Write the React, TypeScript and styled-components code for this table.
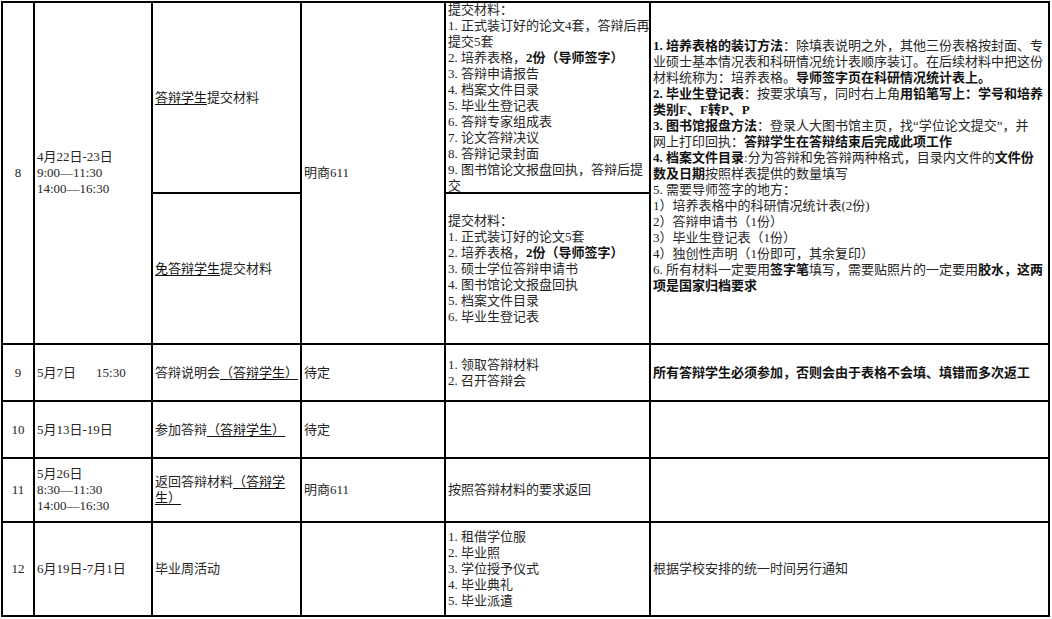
import React from 'react';
import styled, { createGlobalStyle } from 'styled-components';

const GlobalStyle = createGlobalStyle`
  html, body { margin: 0; padding: 0; background: #ffffff; }
  body {
    font-family: "Liberation Serif", "Noto Sans CJK SC", serif;
    font-size: 13px;
    color: #262626;
  }
`;

const Page = styled.div`
  width: 1052px;
  height: 619px;
  box-sizing: border-box;
  padding: 1px 0 0 1px;
  overflow: hidden;
  background: #fff;
`;

const Sheet = styled.table`
  border-collapse: collapse;
  table-layout: fixed;
  width: 1049px;
`;

const Col = styled.col<{ $w: number }>`
  width: ${(p) => p.$w}px;
`;

const Cell = styled.td<{ $center?: boolean; $padBottom?: number }>`
  border: 2px solid #000;
  padding: 0 0 ${(p) => p.$padBottom ?? 0}px ${(p) => (p.$center ? 0 : 2)}px;
  text-align: ${(p) => (p.$center ? 'center' : 'left')};
  vertical-align: middle;
  line-height: 16px;
  white-space: nowrap;
  overflow: hidden;
`;

const Frame = styled.div<{ $h: number }>`
  height: ${(p) => p.$h}px;
  display: flex;
  flex-direction: column;
  justify-content: center;
  overflow: hidden;
`;

const Line = styled.div`
  white-space: nowrap;
`;

const U = styled.span`
  text-decoration: underline;
  text-decoration-thickness: 1px;
  text-underline-offset: 2px;
  color: #111;
`;

const B = styled.span`
  font-weight: 700;
  color: #111;
`;

const Gap = styled.span<{ $w: number }>`
  display: inline-block;
  width: ${(p) => p.$w}px;
`;

const widths = [32, 118, 149, 144, 205, 399];

export default function App() {
  return (
    <>
      <GlobalStyle />
      <Page>
        <Sheet>
          <colgroup>
            {widths.map((w, i) => (
              <Col key={i} $w={w} />
            ))}
          </colgroup>
          <tbody>
            <tr>
              <Cell $center rowSpan={2}>8</Cell>
              <Cell rowSpan={2}>
                <Line>4月22日-23日</Line>
                <Line>9:00—11:30</Line>
                <Line>14:00—16:30</Line>
              </Cell>
              <Cell>
                <Frame $h={189}>
                  <Line>
                    <U>答辩学生</U>提交材料
                  </Line>
                </Frame>
              </Cell>
              <Cell rowSpan={2}>明商611</Cell>
              <Cell>
                <Frame $h={189}>
                  <Line>提交材料：</Line>
                  <Line>1. 正式装订好的论文4套，答辩后再</Line>
                  <Line>提交5套</Line>
                  <Line>
                    2. 培养表格，<B>2份（导师签字）</B>
                  </Line>
                  <Line>3. 答辩申请报告</Line>
                  <Line>4. 档案文件目录</Line>
                  <Line>5. 毕业生登记表</Line>
                  <Line>6. 答辩专家组成表</Line>
                  <Line>7. 论文答辩决议</Line>
                  <Line>8. 答辩记录封面</Line>
                  <Line>9. 图书馆论文报盘回执，答辩后提</Line>
                  <Line>交</Line>
                </Frame>
              </Cell>
              <Cell rowSpan={2} $padBottom={15}>
                <Line>
                  <B>1. 培养表格的装订方法</B>：除填表说明之外，其他三份表格按封面、专
                </Line>
                <Line>业硕士基本情况表和科研情况统计表顺序装订。在后续材料中把这份</Line>
                <Line>
                  材料统称为：培养表格。<B>导师签字页在科研情况统计表上。</B>
                </Line>
                <Line>
                  <B>2. 毕业生登记表</B>：按要求填写，同时右上角<B>用铅笔写上：学号和培养</B>
                </Line>
                <Line>
                  <B>类别F、F转P、P</B>
                </Line>
                <Line>
                  <B>3. 图书馆报盘方法</B>：登录人大图书馆主页，找“学位论文提交”，并
                </Line>
                <Line>
                  网上打印回执：<B>答辩学生在答辩结束后完成此项工作</B>
                </Line>
                <Line>
                  <B>4. 档案文件目录</B>:分为答辩和免答辩两种格式，目录内文件的<B>文件份</B>
                </Line>
                <Line>
                  <B>数及日期</B>按照样表提供的数量填写
                </Line>
                <Line>5. 需要导师签字的地方：</Line>
                <Line>1）培养表格中的科研情况统计表(2份)</Line>
                <Line>2）答辩申请书（1份）</Line>
                <Line>3）毕业生登记表（1份）</Line>
                <Line>4）独创性声明（1份即可，其余复印）</Line>
                <Line>
                  6. 所有材料一定要用<B>签字笔</B>填写，需要贴照片的一定要用<B>胶水，这两</B>
                </Line>
                <Line>
                  <B>项是国家归档要求</B>
                </Line>
              </Cell>
            </tr>
            <tr>
              <Cell>
                <Frame $h={149}>
                  <Line>
                    <U>免答辩学生</U>提交材料
                  </Line>
                </Frame>
              </Cell>
              <Cell>
                <Line>提交材料：</Line>
                <Line>1. 正式装订好的论文5套</Line>
                <Line>
                  2. 培养表格，<B>2份（导师签字）</B>
                </Line>
                <Line>3. 硕士学位答辩申请书</Line>
                <Line>4. 图书馆论文报盘回执</Line>
                <Line>5. 档案文件目录</Line>
                <Line>6. 毕业生登记表</Line>
              </Cell>
            </tr>
            <tr>
              <Cell $center>9</Cell>
              <Cell>
                <Line>
                  5月7日<Gap $w={20} />15:30
                </Line>
              </Cell>
              <Cell>
                <Frame $h={55}>
                  <Line>
                    答辩说明会<U>（答辩学生）</U>
                  </Line>
                </Frame>
              </Cell>
              <Cell>待定</Cell>
              <Cell>
                <Line>1. 领取答辩材料</Line>
                <Line>2. 召开答辩会</Line>
              </Cell>
              <Cell>
                <B>所有答辩学生必须参加，否则会由于表格不会填、填错而多次返工</B>
              </Cell>
            </tr>
            <tr>
              <Cell $center>10</Cell>
              <Cell>5月13日-19日</Cell>
              <Cell>
                <Frame $h={55}>
                  <Line>
                    参加答辩<U>（答辩学生）</U>
                  </Line>
                </Frame>
              </Cell>
              <Cell>待定</Cell>
              <Cell />
              <Cell />
            </tr>
            <tr>
              <Cell $center>11</Cell>
              <Cell>
                <Line>5月26日</Line>
                <Line>8:30—11:30</Line>
                <Line>14:00—16:30</Line>
              </Cell>
              <Cell>
                <Frame $h={62}>
                  <Line>
                    返回答辩材料<U>（答辩学</U>
                  </Line>
                  <Line>
                    <U>生）</U>
                  </Line>
                </Frame>
              </Cell>
              <Cell>明商611</Cell>
              <Cell>按照答辩材料的要求返回</Cell>
              <Cell />
            </tr>
            <tr>
              <Cell $center>12</Cell>
              <Cell>6月19日-7月1日</Cell>
              <Cell>
                <Frame $h={92}>
                  <Line>毕业周活动</Line>
                </Frame>
              </Cell>
              <Cell />
              <Cell>
                <Line>1. 租借学位服</Line>
                <Line>2. 毕业照</Line>
                <Line>3. 学位授予仪式</Line>
                <Line>4. 毕业典礼</Line>
                <Line>5. 毕业派遣</Line>
              </Cell>
              <Cell>根据学校安排的统一时间另行通知</Cell>
            </tr>
          </tbody>
        </Sheet>
      </Page>
    </>
  );
}
